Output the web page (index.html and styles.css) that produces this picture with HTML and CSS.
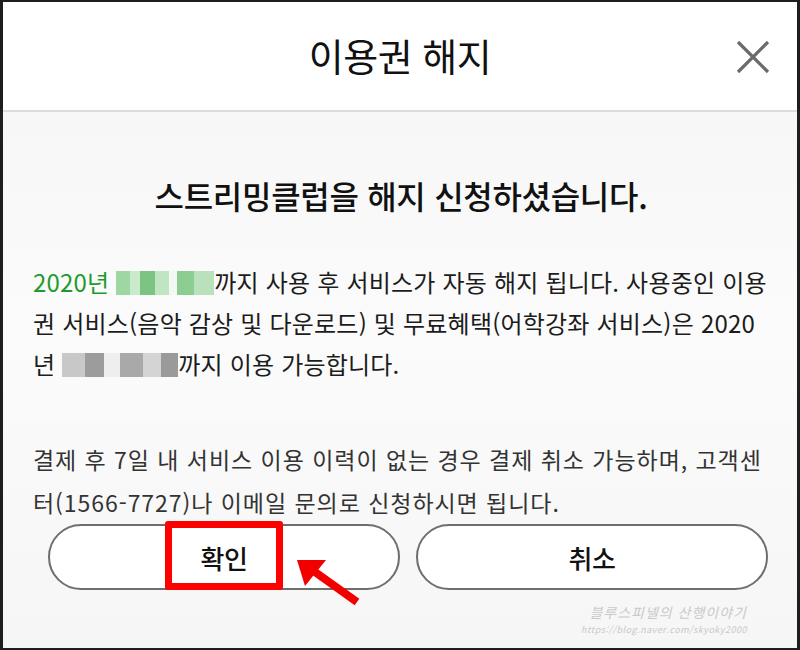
FILE: index.html
```html
<!DOCTYPE html>
<html lang="ko">
<head>
<meta charset="utf-8">
<title>이용권 해지</title>
<link rel="stylesheet" href="styles.css">
</head>
<body>
<div class="frame">
  <header class="header">
    <span class="spacer"></span>
    <h1 class="title">이용권 해지</h1>
    <button class="close" aria-label="닫기">
      <svg width="36" height="36" viewBox="0 0 36 36"><path d="M3 3 L33 33 M33 3 L3 33" stroke="#6b6b6b" stroke-width="3.2" fill="none"/></svg>
    </button>
  </header>
  <main class="content">
    <h2 class="headline">스트리밍클럽을 해지 신청하셨습니다.</h2>
    <p class="para main-para"><span class="green">2020년</span> <span class="blur blur-green"></span>까지 사용 후 서비스가 자동 해지 됩니다. 사용중인 이용권 서비스(음악 감상 및 다운로드) 및 무료혜택(어학강좌 서비스)은 2020년 <span class="blur blur-gray"></span>까지 이용 가능합니다.</p>
    <p class="para sub-para">결제 후 7일 내 서비스 이용 이력이 없는 경우 결제 취소 가능하며, 고객센터(1566-7727)나 이메일 문의로 신청하시면 됩니다.</p>
    <div class="actions">
      <button class="pill confirm">확인</button>
      <button class="pill">취소</button>
      <svg class="arrow" width="70" height="50" viewBox="0 0 70 50"><path d="M20 14 L62 44" stroke="#f20000" stroke-width="8" fill="none"/><polygon points="2,2 31,2 10,28" fill="#f20000"/></svg>
    </div>
    <div class="watermark">
      <span class="wm-title">블루스피넬의 산행이야기</span>
      <span class="wm-url">https://blog.naver.com/skyoky2000</span>
    </div>
  </main>
</div>
</body>
</html>
```
FILE: styles.css
```css
*, *::before, *::after { box-sizing: border-box; }
html, body { margin: 0; padding: 0; background: #fff; }
body { font-family: "Noto Sans CJK KR", "Noto Sans", sans-serif; color: #1a1a1a; }
.frame {
  width: 800px; height: 650px;
  border: 2px solid #1e1e1e; border-left-width: 3px; border-right-width: 3px;
  display: flex; flex-direction: column; overflow: hidden;
}
.header {
  height: 110px; flex: none; background: #fff;
  display: grid; grid-template-columns: 1fr auto 1fr; align-items: center;
  border-bottom: 2px solid #dcdcdc;
}
.title { margin: 0; font-size: 38px; font-weight: 400; letter-spacing: -0.5px; color: #111; padding-bottom: 4px; }
.close { justify-self: end; margin-right: 26px; background: none; border: 0; padding: 0; width: 36px; height: 36px; margin-top: 2px; }
.close svg { display: block; }
.content {
  flex: 1; background: linear-gradient(#f7f7f7, #fbfbfb 40%, #f6f6f6);
  padding: 0 30px 0 30px; position: relative;
  display: flex; flex-direction: column;
}
.headline { margin: 61px -8px 0 0; text-align: center; font-size: 32px; line-height: 44px; font-weight: 500; letter-spacing: -0.3px; color: #111; padding-right: 6px; }
.para { margin: 0; line-height: 41px; }
.main-para { margin-top: 44px; color: #1c1c1c; font-size: 24px; letter-spacing: 0.2px; }
.sub-para { margin-top: 54px; line-height: 43px; color: #333; font-size: 23px; letter-spacing: 0.95px; }
.green { color: #1e9b2c; }
.blur { display: inline-block; height: 24px; vertical-align: -3px; }
.blur-green { width: 98px; background: linear-gradient(90deg, #9fd7a3 0 14%, #c9eacb 14% 24%, #7cc482 24% 40%, #bfe5c2 40% 54%, #f4f8f4 54% 62%, #8ccd91 62% 80%, #b9e2bc 80% 100%); }
.blur-gray { width: 116px; background: linear-gradient(90deg, #c8c8c8 0 20%, #9c9c9c 20% 36%, #eeeeee 36% 50%, #a9a9a9 50% 70%, #d4d4d4 70% 85%, #9a9a9a 85% 100%); }
.actions { margin-top: 0; margin-right: -28px; display: flex; gap: 16px; padding-left: 15px; padding-right: 27px; position: relative; }
.pill {
  flex: 1; height: 66px; border-radius: 33px; border: 2px solid #6e6e6e; background: #fff;
  font-family: inherit; font-size: 26px; color: #111; letter-spacing: -0.3px; font-weight: 500;
  display: flex; align-items: center; justify-content: center; padding: 0;
}
.confirm { position: relative; }
.confirm::after {
  content: ""; position: absolute; left: calc(50% - 59px); width: 118px; top: -5px; bottom: -2px;
  border: 7px solid #f00; border-radius: 3px;
}
.arrow { position: absolute; left: 262px; top: 34px; }
.watermark { display: flex; flex-direction: column; align-items: flex-end; padding-right: 20px; margin-top: 12px; color: #c9c9c9; font-style: italic; }
.wm-title { font-size: 14px; line-height: 20px; letter-spacing: 1px; }
.wm-url { font-size: 9px; line-height: 12px; letter-spacing: 0.5px; margin-top: 2px; }
```
